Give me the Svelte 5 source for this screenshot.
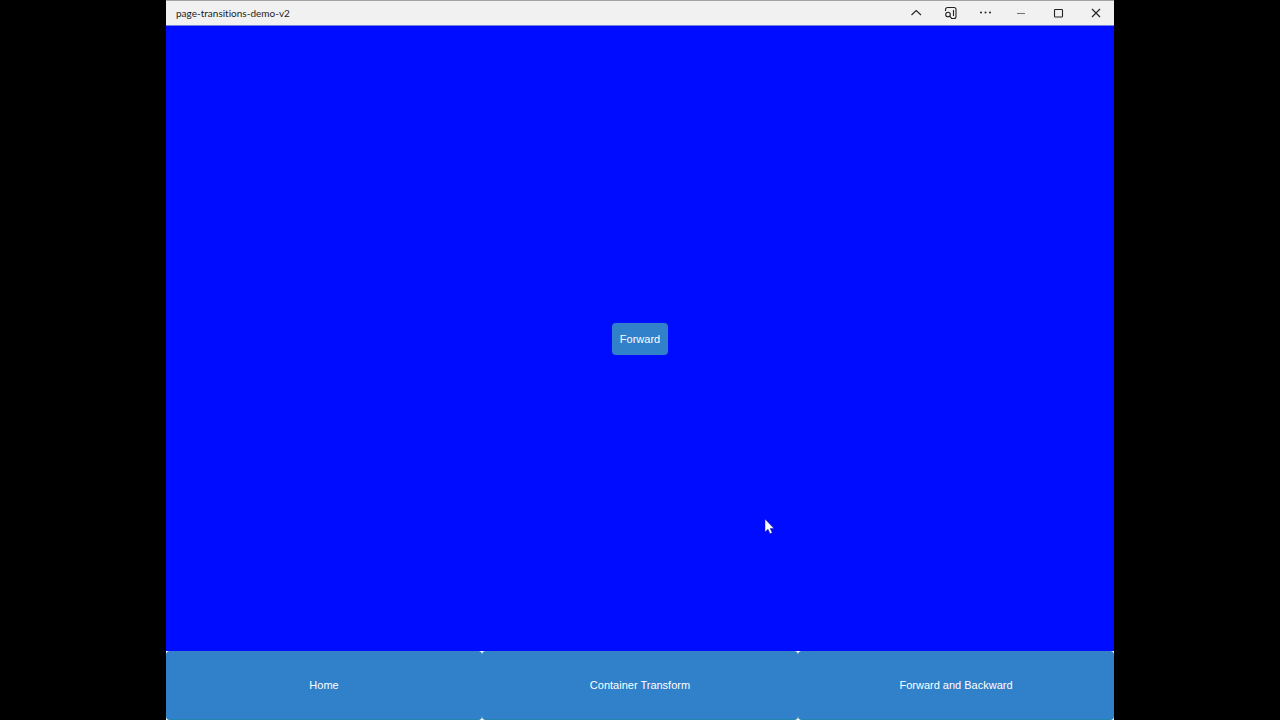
<script>
  const pages = ['Home', 'Container Transform', 'Forward and Backward'];
</script>

<div class="stage">
  <div class="window">
    <header>
      <h1>page-transitions-demo-v2</h1>
      <div class="controls">
        <button class="tool" aria-label="Collapse">
          <svg width="14" height="14" viewBox="0 0 14 14"><path d="M2.5 9 7.2 4.5 12 9" /></svg>
        </button>
        <button class="tool" aria-label="Search in sidebar">
          <svg width="14" height="14" viewBox="0 0 14 14">
            <path d="M1.5 5V3.5a2 2 0 0 1 2-2H10a2 2 0 0 1 2 2v7a2 2 0 0 1-2 2H7M9.5 4v6" />
            <circle cx="4" cy="8.5" r="2.3" />
            <path d="m5.6 10.2 2.2 2.2" />
          </svg>
        </button>
        <button class="tool" aria-label="More">
          <svg class="dots" width="14" height="14" viewBox="0 0 14 14">
            <circle cx="2" cy="6.5" r="1" /><circle cx="6.5" cy="6.5" r="1" /><circle cx="11" cy="6.5" r="1" />
          </svg>
        </button>
        <button class="frame" aria-label="Minimize">
          <svg class="faint" width="14" height="14" viewBox="0 0 14 14"><path d="M2 7.5h8" /></svg>
        </button>
        <button class="frame" aria-label="Maximize">
          <svg width="14" height="14" viewBox="0 0 14 14"><rect x="2.5" y="3.5" width="8" height="7.5" rx="0.8" /></svg>
        </button>
        <button class="frame" aria-label="Close">
          <svg width="14" height="14" viewBox="0 0 14 14"><path d="m3 3 8 8M11 3l-8 8" /></svg>
        </button>
      </div>
    </header>
    <main>
      <button class="forward">Forward</button>
    </main>
    <nav>
      {#each pages as page}
        <button>{page}</button>
      {/each}
    </nav>
  </div>
  <svg class="pointer" width="12" height="18" viewBox="0 0 12 18" aria-hidden="true">
    <path d="M1 1v13l3-2.8 2 4.6 2.2-1-2-4.3H10z" />
  </svg>
</div>

<style>
  :global(body) {
    margin: 0;
    background: #000;
  }

  .stage {
    position: relative;
    box-sizing: border-box;
    min-height: 100vh;
    padding: 0 166px;
    display: flex;
    background: #000;
    font-family: "Liberation Sans", Arial, sans-serif;
  }

  .window {
    flex: 1;
    min-width: 0;
    display: flex;
    flex-direction: column;
    background: #fff;
  }

  button {
    margin: 0;
    border: 0;
    font: inherit;
    cursor: default;
  }

  header {
    display: flex;
    align-items: center;
    justify-content: space-between;
    box-sizing: border-box;
    height: 26px;
    padding-left: 10px;
    border-top: 1px solid #a3a3a3;
    border-bottom: 1px solid #6f83dc;
    background: #f1f1f1;
  }

  h1 {
    margin: 0;
    color: #1c1c1c;
    font: 400 10px/14px Lato, "Segoe UI", sans-serif;
    font-variant-ligatures: none;
  }

  .controls {
    display: flex;
    align-items: center;
  }

  .controls button {
    display: flex;
    justify-content: center;
    padding: 4px 0;
    background: transparent;
  }

  .controls .tool {
    width: 35px;
  }

  .controls .frame {
    width: 37px;
  }

  .controls svg {
    fill: none;
    stroke: #222;
    stroke-width: 1.1;
  }

  .controls .dots {
    fill: #222;
    stroke: none;
  }

  .controls .faint {
    stroke: #777;
  }

  main {
    flex: 1;
    display: flex;
    align-items: center;
    justify-content: center;
    background: #000cff;
  }

  .forward {
    padding: 8px;
    border-radius: 4px;
    background: #3080ca;
    color: #fff;
    font-size: 11px;
    line-height: 16px;
  }

  nav {
    display: grid;
    grid-template-columns: repeat(3, 1fr);
    background: #fff;
  }

  nav button {
    padding: 26px 8px;
    border-bottom: 1px solid #2385ae;
    border-radius: 4px;
    background: #3080ca;
    color: #fff;
    font-size: 11px;
    line-height: 16px;
  }

  .pointer {
    position: absolute;
    left: 764px;
    top: 518px;
    fill: #fff;
    stroke: #111a9c;
    stroke-width: 0.5;
  }
</style>
